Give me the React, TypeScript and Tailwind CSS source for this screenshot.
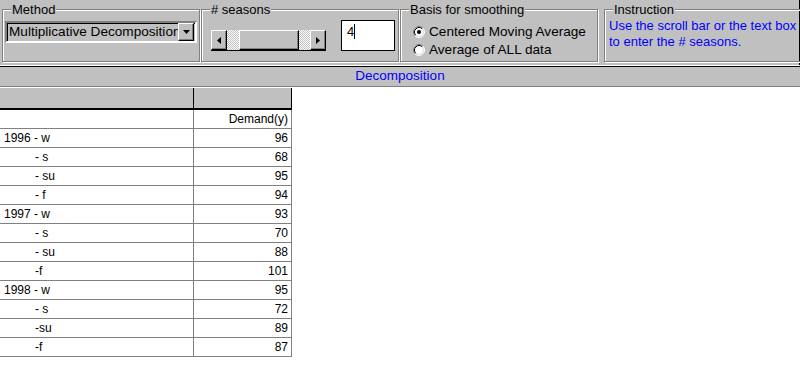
const rows: { label: string; value: string; indent?: boolean }[] = [
  { label: "", value: "Demand(y)" },
  { label: "1996 - w", value: "96" },
  { label: "- s", value: "68", indent: true },
  { label: "- su", value: "95", indent: true },
  { label: "- f", value: "94", indent: true },
  { label: "1997 - w", value: "93" },
  { label: "- s", value: "70", indent: true },
  { label: "- su", value: "88", indent: true },
  { label: "-f", value: "101", indent: true },
  { label: "1998 - w", value: "95" },
  { label: "- s", value: "72", indent: true },
  { label: "-su", value: "89", indent: true },
  { label: "-f", value: "87", indent: true },
];

const raised =
  "bg-[#c0c0c0] border border-t-white border-l-white border-b-black border-r-black shadow-[inset_-1px_-1px_0_#808080]";

function Group({
  title,
  className,
  children,
}: {
  title: string;
  className?: string;
  children: React.ReactNode;
}) {
  return (
    <fieldset
      className={`mt-[2px] h-[60px] shrink-0 border border-[#808080] shadow-[1px_1px_0_#fff,inset_1px_1px_0_#fff] ${className ?? ""}`}
    >
      <legend className="ml-[8px] px-[1px] text-[13px] leading-[15px] text-black bg-[#c0c0c0]">
        {title}
      </legend>
      {children}
    </fieldset>
  );
}

function Radio({ checked }: { checked?: boolean }) {
  return (
    <svg width="12" height="12" viewBox="0 0 12 12" className="shrink-0">
      <circle cx="6" cy="6" r="5" fill="#fff" />
      <path d="M2.11 9.89 A5.5 5.5 0 0 1 9.89 2.11" fill="none" stroke="#808080" />
      <path d="M9.89 2.11 A5.5 5.5 0 0 1 2.11 9.89" fill="none" stroke="#fff" />
      <path d="M2.82 9.18 A4.5 4.5 0 0 1 9.18 2.82" fill="none" stroke="#000" />
      <path d="M9.18 2.82 A4.5 4.5 0 0 1 2.82 9.18" fill="none" stroke="#dfdfdf" />
      {checked && <circle cx="6" cy="6" r="2" fill="#000" />}
    </svg>
  );
}

export default function App() {
  return (
    <div className="w-[800px] h-[374px] overflow-hidden bg-white font-['Liberation_Sans',Arial,sans-serif]">
      {/* control panel */}
      <div className="h-[65px] bg-[#c0c0c0] flex items-start pl-[2px] border-r border-black">
        <Group title="Method" className="w-[198px]">
          <div className="ml-[2px] mt-[4px] w-[192px] h-[22px] flex items-center border-2 border-t-[#808080] border-l-[#808080] border-b-white border-r-white shadow-[inset_1px_1px_0_#000]">
            <span className="flex-1 overflow-hidden whitespace-nowrap pl-[2px] text-[13.6px] text-black">
              Multiplicative Decomposition
            </span>
            <div className={`w-[16px] h-[18px] mr-px flex items-center justify-center ${raised}`}>
              <svg width="7" height="4" viewBox="0 0 7 4">
                <polygon points="0,0 7,0 3.5,4" fill="#000" />
              </svg>
            </div>
          </div>
        </Group>

        <Group title="# seasons" className="w-[198px] ml-px">
          <div className="flex items-end pt-[3px]">
            <div className="ml-[9px] flex h-[21px] w-[115px] border-b border-black">
              <div className={`w-[16px] h-full flex items-center justify-center ${raised}`}>
                <svg width="4" height="7" viewBox="0 0 4 7">
                  <polygon points="4,0 4,7 0,3.5" fill="#000" />
                </svg>
              </div>
              <div className="w-[12px] h-full bg-[repeating-conic-gradient(#c0c0c0_0_25%,#fff_0_50%)] bg-[length:2px_2px]" />
              <div className={`w-[60px] h-full ${raised}`} />
              <div className="w-[11px] h-full bg-[repeating-conic-gradient(#c0c0c0_0_25%,#fff_0_50%)] bg-[length:2px_2px]" />
              <div className={`w-[16px] h-full flex items-center justify-center ${raised}`}>
                <svg width="4" height="7" viewBox="0 0 4 7">
                  <polygon points="0,0 0,7 4,3.5" fill="#000" />
                </svg>
              </div>
            </div>
            <div className="ml-[15px] w-[54px] h-[31px] bg-white border border-black flex items-start pl-[5px] pt-[3px]">
              <span className="text-[13px] leading-[15px] text-black">4</span>
              <span className="w-px h-[15px] bg-black" />
            </div>
          </div>
        </Group>

        <Group title="Basis for smoothing" className="w-[198px] ml-px">
          <div className="pl-[12px] pt-[6px] flex flex-col text-[13.6px] text-black">
            <div className="h-[18px] flex items-center gap-[4px]">
              <Radio checked />
              <span>Centered Moving Average</span>
            </div>
            <div className="h-[18px] flex items-center gap-[4px]">
              <Radio />
              <span>Average of ALL data</span>
            </div>
          </div>
        </Group>

        <Group title="Instruction" className="w-[200px] ml-[6px]">
          <p className="pl-[4px] pt-px text-[13px] leading-[16px] text-[#0000ff] whitespace-nowrap">
            Use the scroll bar or the text box
            <br />
            to enter the # seasons.
          </p>
        </Group>
      </div>
      <div className="h-px bg-white" />
      <div className="h-px bg-black" />

      {/* title bar */}
      <div className="h-[20px] bg-[#c0c0c0] border-b border-[#808080] flex items-center justify-center text-[13.5px] text-[#0000ff]">
        Decomposition
      </div>

      {/* grid */}
      <div className="w-[292px] text-[12px] text-black">
        <div className="flex h-[23px] border-t border-white border-b-2 border-b-black">
          <div className="w-[194px] bg-[#c0c0c0] border-r border-black" />
          <div className="w-[98px] bg-[#c0c0c0] border-r border-black" />
        </div>
        {rows.map((r, i) => (
          <div key={i} className="flex h-[19px] border-b border-[#808080]">
            <div
              className={`w-[194px] border-r border-[#808080] flex items-center ${r.indent ? "pl-[35px]" : "pl-[4px]"}`}
            >
              {r.label}
            </div>
            <div className="w-[98px] border-r border-[#808080] flex items-center justify-end pr-[3px]">
              {r.value}
            </div>
          </div>
        ))}
      </div>
    </div>
  );
}
